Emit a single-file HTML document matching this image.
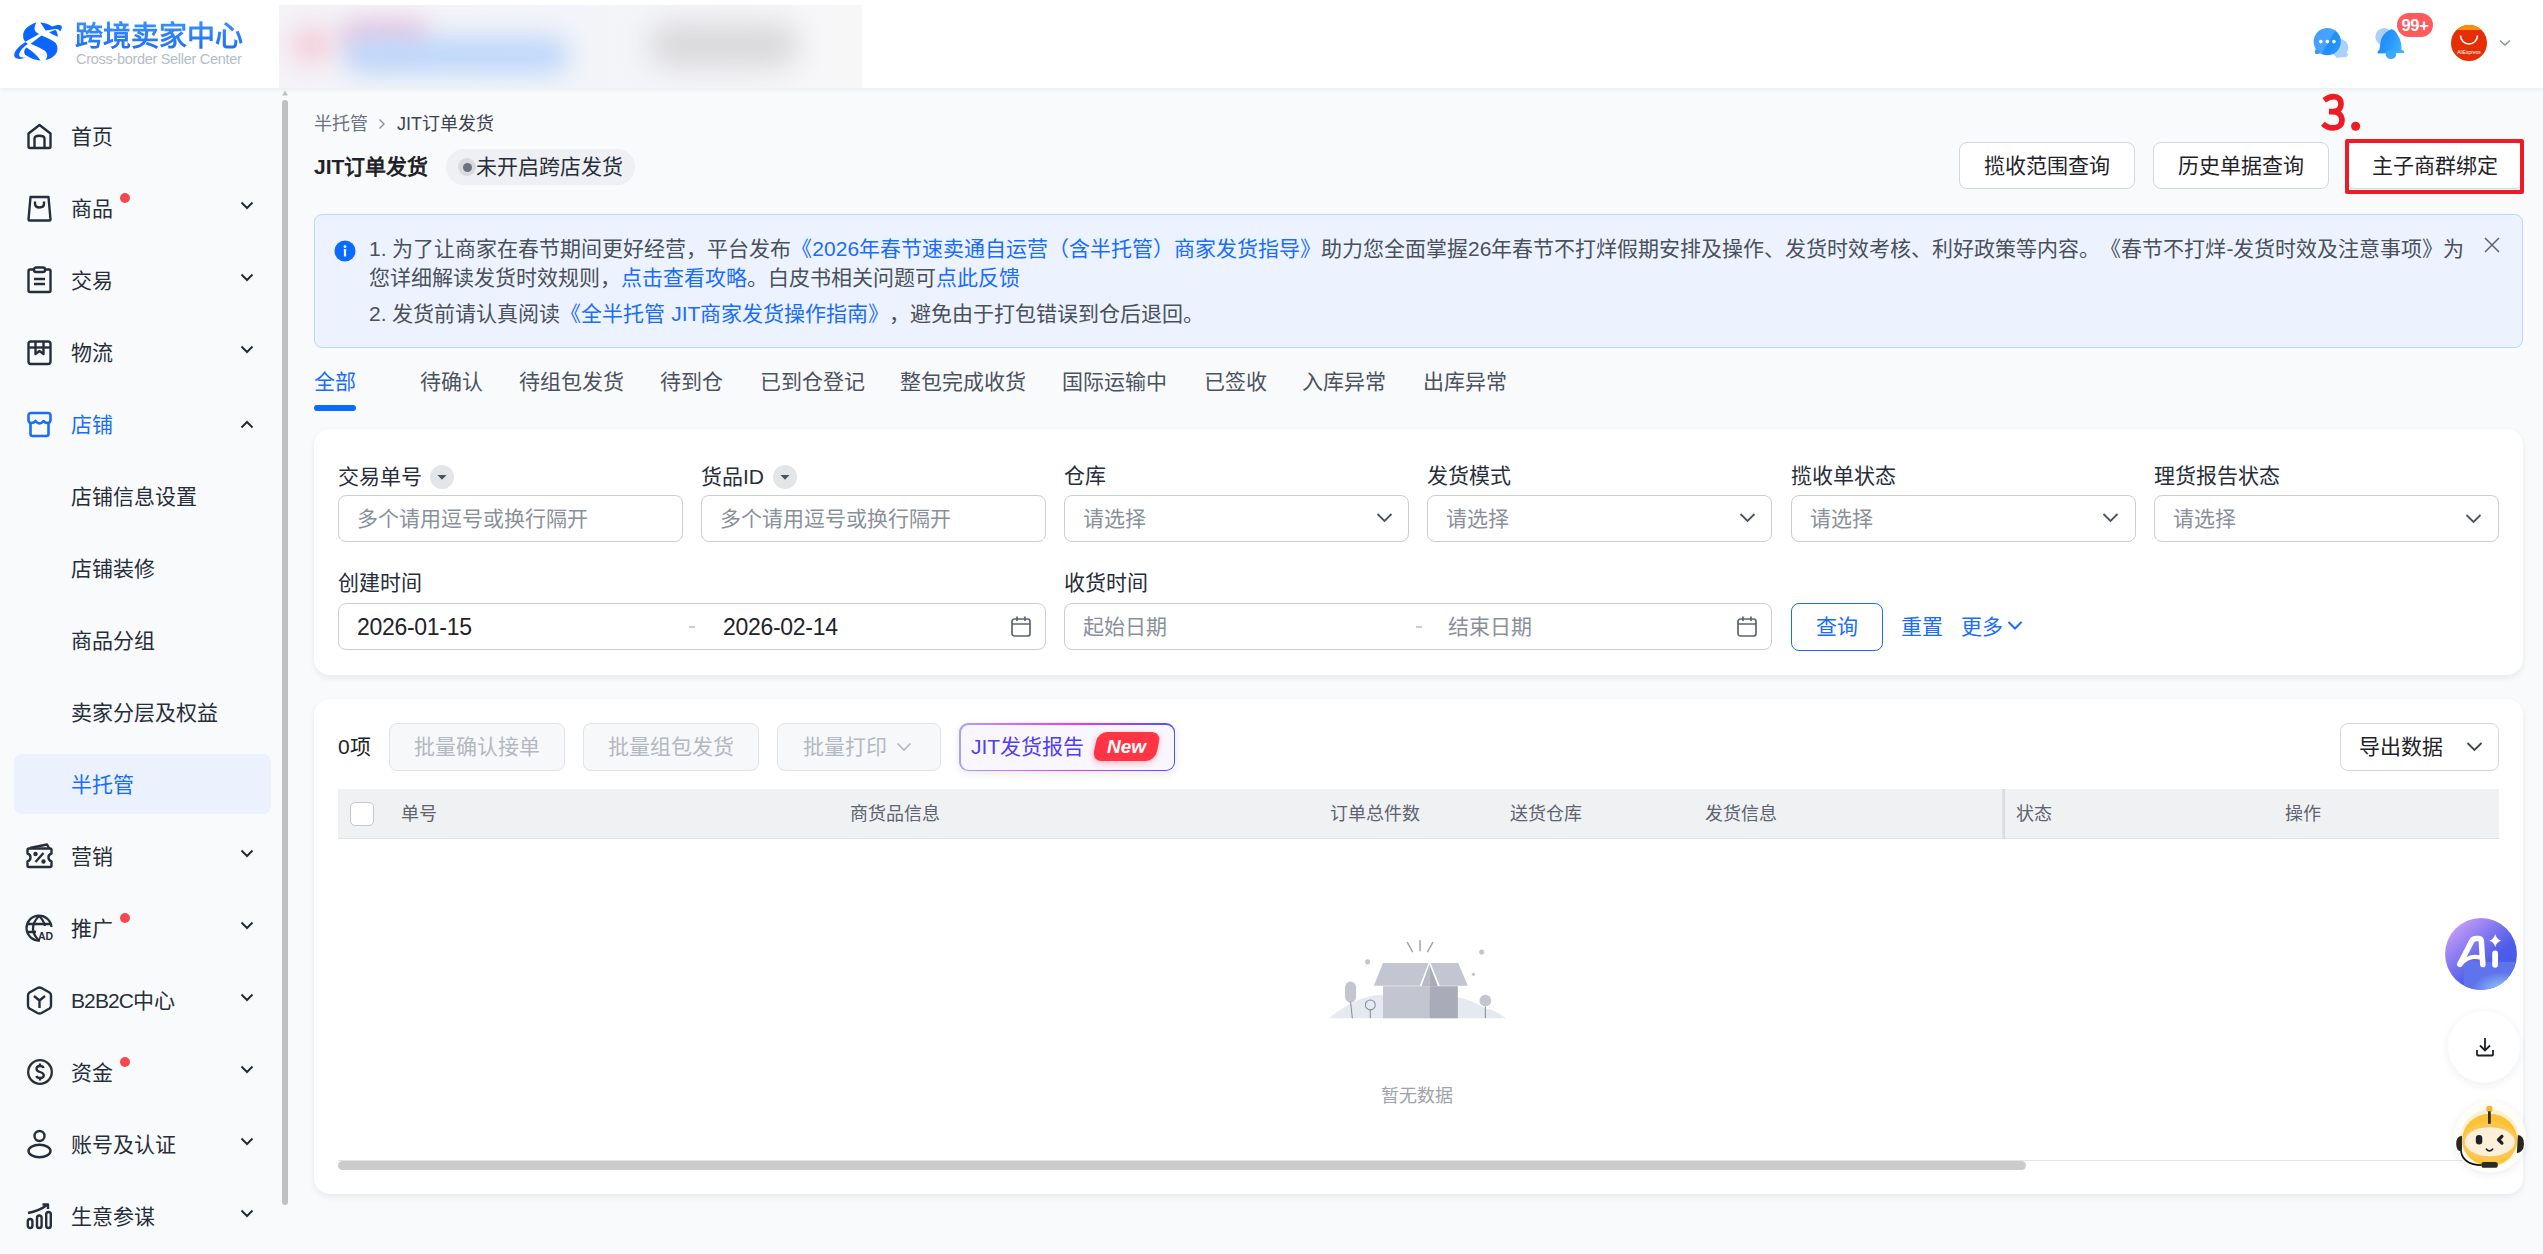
<!DOCTYPE html>
<html lang="zh-CN"><head><meta charset="utf-8">
<style>
*{box-sizing:border-box;margin:0;padding:0}
html,body{text-spacing-trim:space-all;width:2543px;height:1254px;overflow:hidden;background:#f9fafb;font-family:"Liberation Sans",sans-serif;color:#1f2329}
.a{position:absolute;white-space:nowrap}
#hdr{position:absolute;left:0;top:0;width:2543px;height:88px;background:#fff;box-shadow:0 2px 5px rgba(0,0,0,.06)}
.side-t{position:absolute;left:71px;font-size:21px;line-height:30px;color:#272e3b}
.chev{position:absolute;left:240px;width:14px;height:9px}
.card{position:absolute;background:#fff;border-radius:16px;box-shadow:0 3px 6px rgba(20,30,50,.075)}
.lbl{position:absolute;font-size:21px;line-height:30px;color:#272e3b;margin-top:1px}
.inp{position:absolute;height:47px;border:1.5px solid #c9ced6;border-radius:8px;background:#fff}
.ph{position:absolute;font-size:21px;line-height:30px;color:#8a909b}
.tab{position:absolute;top:367px;font-size:21px;line-height:30px;color:#4b5260}
.btn{position:absolute;height:47px;border:1.5px solid #d3d7de;border-radius:8px;background:#fff;font-size:21px;line-height:46px;text-align:center;color:#1f2329}
.th{position:absolute;top:800px;font-size:18px;line-height:28px;color:#5d6470}
</style></head><body>
<div id="hdr">
  <!-- logo mark -->
  <svg class="a" style="left:10px;top:18px" width="56" height="48" viewBox="0 0 1463 1254">
    <g fill="#0a66ff">
    <path d="M690 120 C520 170 340 290 342 460 C344 560 375 600 400 618 L765 420 C660 380 590 300 690 120 Z"/>
    <path d="M790 115 C920 120 1020 160 1100 225 C1180 190 1290 170 1345 200 C1370 240 1340 320 1305 355 C1290 300 1250 280 1190 290 L930 325 C880 240 830 170 790 115 Z"/>
    <path d="M1020 370 L1190 310 C1230 370 1250 430 1250 490 C1170 460 1090 420 1020 370 Z"/>
    <path d="M540 670 L820 455 C980 520 1100 570 1180 640 C1260 720 1260 880 1180 960 C1100 1050 1000 1090 925 1100 C990 1020 990 920 900 850 C780 770 650 720 540 670 Z"/>
    <path d="M430 770 C560 850 700 960 800 1110 C640 1100 480 1040 390 950 C350 900 370 820 430 770 Z"/>
    <path d="M400 625 C250 720 120 850 110 960 C105 1060 220 1100 410 1040 C300 1040 220 1010 240 940 C270 840 360 740 470 680 Z"/>
    </g>
  </svg>
  <div class="a" style="left:75px;top:17px;font-size:28px;line-height:40px;font-weight:bold;color:#1f74f7;background:linear-gradient(180deg,#3f95ff,#1766f3);-webkit-background-clip:text;-webkit-text-fill-color:transparent">跨境卖家中心</div>
  <div class="a" style="left:76px;top:50px;font-size:14.5px;line-height:18px;color:#b5bcc7;letter-spacing:-0.3px">Cross-border Seller Center</div>
  <!-- blurred area -->
  <div class="a" style="left:279px;top:5px;width:583px;height:83px;background:linear-gradient(90deg,#f4f3f8,#f3f4f9 50%,#f7f7f8);overflow:hidden">
    <div class="a" style="left:12px;top:22px;width:40px;height:36px;background:#f5ccd8;filter:blur(12px);border-radius:18px"></div>
    <div class="a" style="left:60px;top:14px;width:90px;height:34px;background:#e8c6df;filter:blur(12px);border-radius:17px"></div>
    <div class="a" style="left:65px;top:32px;width:225px;height:36px;background:#bcd6fa;filter:blur(13px);border-radius:18px"></div>
    <div class="a" style="left:370px;top:18px;width:150px;height:44px;background:#d9d9db;filter:blur(14px);border-radius:22px"></div>
  </div>
  <!-- chat icon -->
  <svg class="a" style="left:2300px;top:10px" width="60" height="60" viewBox="0 0 1254 1254">
    <defs>
      <linearGradient id="cg" x1="0" y1="0.2" x2="1" y2="0.8"><stop offset="0" stop-color="#4a98ff"/><stop offset=".5" stop-color="#45a6ff"/><stop offset=".58" stop-color="#1f8cff"/><stop offset="1" stop-color="#2a98ff"/></linearGradient>
      <filter id="cb"><feGaussianBlur stdDeviation="8"/></filter>
    </defs>
    <g filter="url(#cb)">
    <circle cx="820" cy="790" r="190" fill="#a9d1fb"/>
    <path d="M700 900 L990 900 Q1010 960 970 980 L760 1000 Z" fill="#a9d1fb"/>
    <circle cx="570" cy="660" r="285" fill="url(#cg)"/>
    <path d="M330 800 Q300 880 320 915 Q360 930 440 900 Z" fill="#3f96ff"/>
    <circle cx="435" cy="660" r="38" fill="#fff"/><circle cx="572" cy="660" r="38" fill="#fff"/><circle cx="708" cy="660" r="38" fill="#fff"/>
    </g>
  </svg>
  <!-- bell -->
  <svg class="a" style="left:2300px;top:10px" width="120" height="60" viewBox="0 0 2508 1254">
    <defs><linearGradient id="bg" x1="0" y1="0.3" x2="1" y2="0.7"><stop offset="0" stop-color="#1884ff"/><stop offset=".5" stop-color="#2a98ff"/><stop offset="1" stop-color="#3fb4ff"/></linearGradient>
    <filter id="bb"><feGaussianBlur stdDeviation="10"/></filter></defs>
    <g filter="url(#bb)">
    <circle cx="1760" cy="560" r="185" fill="#a8d0fb"/>
    <path d="M1900 400 Q1990 400 2040 520 Q2110 620 2120 760 L2120 830 Q2190 850 2180 900 L1630 910 Q1600 870 1660 830 L1680 700 Q1690 500 1900 400 Z" fill="url(#bg)"/>
    <ellipse cx="1900" cy="930" rx="110" ry="95" fill="#3aa8ff"/>
    </g>
  </svg>
  <div class="a" style="left:2397px;top:13px;width:36px;height:24px;border-radius:12px;background:#ff5b5f;color:#fff;font-size:16.5px;line-height:25px;font-weight:bold;text-align:center;letter-spacing:-0.3px">99+</div>
  <!-- avatar -->
  <div class="a" style="left:2451px;top:25px;width:36px;height:36px;border-radius:50%;background:#e62e04;overflow:hidden">
    <div class="a" style="left:0;top:0;width:36px;height:5px;background:#ff8f00"></div>
    <svg class="a" style="left:0;top:0" width="36" height="36" viewBox="0 0 36 36"><path d="M9.5 10.5 A8.5 8.5 0 0 0 26.5 10.5" stroke="#fff" stroke-width="1.6" fill="none"/></svg>
    <div class="a" style="left:0;top:24px;width:36px;text-align:center;font-size:5px;line-height:6px;color:#fff">AliExpress</div>
  </div>
  <svg class="a" style="left:2499px;top:39px" width="12" height="8" viewBox="0 0 12 8"><path d="M1 1.5 L6 6 L11 1.5" stroke="#8b93a3" stroke-width="1.4" fill="none"/></svg>
</div>
<div id="side">
  <div class="a" style="left:14px;top:754px;width:257px;height:60px;border-radius:8px;background:#ebf2fe"></div>
  <!-- icons -->
  <svg class="a" style="left:26px;top:123px" width="27" height="27" viewBox="0 0 27 27" fill="none" stroke="#272e3b" stroke-width="2.4" stroke-linejoin="round">
    <path d="M2.5 10.5 L13.5 2 L24.5 10.5 V23.5 Q24.5 25 23 25 H4 Q2.5 25 2.5 23.5 Z"/><path d="M8.5 25 V15.5 Q8.5 12.8 13.5 12.8 Q18.5 12.8 18.5 15.5 V25"/>
  </svg>
  <svg class="a" style="left:26px;top:195px" width="27" height="27" viewBox="0 0 27 27" fill="none" stroke="#272e3b" stroke-width="2.4" stroke-linejoin="round">
    <path d="M4.5 2 H22.5 L24.5 24.5 Q24.5 25.5 23.5 25.5 H3.5 Q2.5 25.5 2.5 24.5 Z"/><path d="M9 6.5 V8.5 Q9 12.5 13.5 12.5 Q18 12.5 18 8.5 V6.5"/>
  </svg>
  <svg class="a" style="left:26px;top:266px" width="27" height="28" viewBox="0 0 27 28" fill="none" stroke="#272e3b" stroke-width="2.4" stroke-linejoin="round">
    <path d="M8 3.5 H4 Q2.5 3.5 2.5 5 V24.5 Q2.5 26 4 26 H23 Q24.5 26 24.5 24.5 V5 Q24.5 3.5 23 3.5 H19"/><rect x="8" y="1.5" width="11" height="4.5" rx="2"/><path d="M8 13 H19 M8 18 H19"/>
  </svg>
  <svg class="a" style="left:26px;top:340px" width="27" height="26" viewBox="0 0 27 26" fill="none" stroke="#272e3b" stroke-width="2.4" stroke-linejoin="round">
    <rect x="2.5" y="1.5" width="22" height="22.5" rx="2.5"/><path d="M2.5 7.5 H24.5"/><path d="M9.5 1.5 V14 L13.5 11 L17.5 14 V1.5"/>
  </svg>
  <svg class="a" style="left:26px;top:411px" width="27" height="27" viewBox="0 0 27 27" fill="none" stroke="#1a6cff" stroke-width="2.6" stroke-linejoin="round">
    <path d="M5 2 H22 Q24.5 2 24.5 4.5 V9 Q24.5 12 21.5 12 Q19 12 17.5 10 Q15.5 12.5 13.5 12.5 Q11.5 12.5 9.5 10 Q8 12 5.5 12 Q2.5 12 2.5 9 V4.5 Q2.5 2 5 2 Z"/><path d="M4.5 12 V23 Q4.5 25 6.5 25 H20.5 Q22.5 25 22.5 23 V12"/>
  </svg>
  <svg class="a" style="left:25px;top:842px" width="29" height="28" viewBox="0 0 29 28" fill="none" stroke="#272e3b" stroke-width="2.4" stroke-linejoin="round">
    <path d="M5 6 L22 2.5 L24 6"/><path d="M4 6.5 H25 Q26.5 6.5 26.5 8 V11.5 Q23.5 12.5 23.5 15.5 Q23.5 18.5 26.5 19.5 V23.5 Q26.5 25 25 25 H4 Q2.5 25 2.5 23.5 V19.5 Q5.5 18.5 5.5 15.5 Q5.5 12.5 2.5 11.5 V8 Q2.5 6.5 4 6.5 Z"/><path d="M10.5 20 L18.5 11"/><circle cx="10.5" cy="12" r="1" fill="#272e3b"/><circle cx="18.5" cy="19.5" r="1" fill="#272e3b"/>
  </svg>
  <svg class="a" style="left:25px;top:914px" width="29" height="29" viewBox="0 0 29 29" fill="none" stroke="#272e3b" stroke-width="2.3">
    <path d="M15 26.5 A12.5 12.5 0 1 1 26.5 13"/><path d="M14 2 Q8 8 8 14.5 Q8 21 14 26.5"/><path d="M14 2 Q18.5 6 20 12"/><path d="M2.5 10 H25 M2.5 18 H11"/>
    <text x="13" y="25.5" font-family="Liberation Sans" font-size="10.5" font-weight="bold" fill="#272e3b" stroke="none">AD</text>
  </svg>
  <svg class="a" style="left:26px;top:986px" width="27" height="29" viewBox="0 0 27 29" fill="none" stroke="#272e3b" stroke-width="2.4" stroke-linejoin="round">
    <path d="M11.5 2 Q13.5 1 15.5 2 L23.5 6.5 Q25 7.5 25 9.5 V19.5 Q25 21.5 23.5 22.5 L15.5 27 Q13.5 28 11.5 27 L3.5 22.5 Q2 21.5 2 19.5 V9.5 Q2 7.5 3.5 6.5 Z"/><path d="M8 10 L13.5 14.5 L19 10 M13.5 14.5 V22"/>
  </svg>
  <svg class="a" style="left:26px;top:1058px" width="28" height="28" viewBox="0 0 28 28" fill="none" stroke="#272e3b" stroke-width="2.3">
    <circle cx="14" cy="14" r="11.8"/><path d="M17.5 10 Q17 8 14 8 Q10.5 8 10.5 10.7 Q10.5 13 14 14 Q17.8 15 17.8 17.5 Q17.8 20 14 20 Q11 20 10.3 18"/><path d="M14 5.5 V8 M14 20 V22.5"/>
  </svg>
  <svg class="a" style="left:26px;top:1129px" width="27" height="30" viewBox="0 0 27 30" fill="none" stroke="#272e3b" stroke-width="2.4">
    <circle cx="13.5" cy="7" r="5"/><ellipse cx="13.5" cy="22" rx="11" ry="6.2"/>
  </svg>
  <svg class="a" style="left:25px;top:1202px" width="29" height="28" viewBox="0 0 29 28" fill="none" stroke="#272e3b" stroke-width="2.4">
    <rect x="2.8" y="17" width="4.6" height="9" rx="2.3"/><rect x="12" y="13.5" width="4.6" height="12.5" rx="2.3"/><rect x="21.2" y="10" width="4.6" height="16" rx="2.3"/>
    <path d="M3 11 Q14 9 22 3"/><path d="M17.5 2.5 H23 V7" stroke-linejoin="round"/>
  </svg>
  <!-- labels -->
  <div class="side-t" style="top:122px">首页</div>
  <div class="side-t" style="top:194px">商品</div>
  <div class="side-t" style="top:266px">交易</div>
  <div class="side-t" style="top:338px">物流</div>
  <div class="side-t" style="top:410px;color:#1a6cff">店铺</div>
  <div class="side-t" style="top:482px">店铺信息设置</div>
  <div class="side-t" style="top:554px">店铺装修</div>
  <div class="side-t" style="top:626px">商品分组</div>
  <div class="side-t" style="top:698px">卖家分层及权益</div>
  <div class="side-t" style="top:770px;color:#1a6cff">半托管</div>
  <div class="side-t" style="top:842px">营销</div>
  <div class="side-t" style="top:914px">推广</div>
  <div class="side-t" style="top:986px"><span style="letter-spacing:-0.9px">B2B2C</span>中心</div>
  <div class="side-t" style="top:1058px">资金</div>
  <div class="side-t" style="top:1130px">账号及认证</div>
  <div class="side-t" style="top:1202px">生意参谋</div>
  <!-- red dots -->
  <div class="a" style="left:120px;top:193px;width:10px;height:10px;border-radius:50%;background:#f5484d"></div>
  <div class="a" style="left:120px;top:913px;width:10px;height:10px;border-radius:50%;background:#f5484d"></div>
  <div class="a" style="left:120px;top:1057px;width:10px;height:10px;border-radius:50%;background:#f5484d"></div>
  <!-- chevrons -->
  <svg class="chev" style="top:201px" viewBox="0 0 14 9"><path d="M1.5 1.5 L7 7 L12.5 1.5" stroke="#272e3b" stroke-width="2" fill="none"/></svg>
  <svg class="chev" style="top:273px" viewBox="0 0 14 9"><path d="M1.5 1.5 L7 7 L12.5 1.5" stroke="#272e3b" stroke-width="2" fill="none"/></svg>
  <svg class="chev" style="top:345px" viewBox="0 0 14 9"><path d="M1.5 1.5 L7 7 L12.5 1.5" stroke="#272e3b" stroke-width="2" fill="none"/></svg>
  <svg class="chev" style="top:420px" viewBox="0 0 14 9"><path d="M1.5 7.5 L7 2 L12.5 7.5" stroke="#272e3b" stroke-width="2" fill="none"/></svg>
  <svg class="chev" style="top:849px" viewBox="0 0 14 9"><path d="M1.5 1.5 L7 7 L12.5 1.5" stroke="#272e3b" stroke-width="2" fill="none"/></svg>
  <svg class="chev" style="top:921px" viewBox="0 0 14 9"><path d="M1.5 1.5 L7 7 L12.5 1.5" stroke="#272e3b" stroke-width="2" fill="none"/></svg>
  <svg class="chev" style="top:993px" viewBox="0 0 14 9"><path d="M1.5 1.5 L7 7 L12.5 1.5" stroke="#272e3b" stroke-width="2" fill="none"/></svg>
  <svg class="chev" style="top:1065px" viewBox="0 0 14 9"><path d="M1.5 1.5 L7 7 L12.5 1.5" stroke="#272e3b" stroke-width="2" fill="none"/></svg>
  <svg class="chev" style="top:1137px" viewBox="0 0 14 9"><path d="M1.5 1.5 L7 7 L12.5 1.5" stroke="#272e3b" stroke-width="2" fill="none"/></svg>
  <svg class="chev" style="top:1209px" viewBox="0 0 14 9"><path d="M1.5 1.5 L7 7 L12.5 1.5" stroke="#272e3b" stroke-width="2" fill="none"/></svg>
  <!-- scrollbar -->
  <svg class="a" style="left:281px;top:89px" width="8" height="8" viewBox="0 0 8 8"><path d="M1 6.5 L4 1.5 L7 6.5 Z" fill="#c1c1c1"/></svg>
  <div class="a" style="left:282px;top:100px;width:6px;height:1105px;border-radius:3px;background:#c1c1c1"></div>
</div>
<div id="top">
  <div class="a" style="left:314px;top:110px;font-size:18px;line-height:28px;color:#6b7280">半托管</div>
  <svg class="a" style="left:377px;top:118px" width="10" height="12" viewBox="0 0 10 12"><path d="M2.5 1.5 L7 6 L2.5 10.5" stroke="#8a909b" stroke-width="1.4" fill="none"/></svg>
  <div class="a" style="left:397px;top:110px;font-size:18px;line-height:28px;color:#3d4350">JIT订单发货</div>
  <div class="a" style="left:314px;top:152px;font-size:21px;line-height:30px;font-weight:bold;color:#1f2329">JIT订单发货</div>
  <div class="a" style="left:446px;top:149px;width:189px;height:36px;border-radius:18px;background:#eff0f3"></div>
  <div class="a" style="left:458px;top:158px;width:18px;height:18px;border-radius:50%;background:#d8dadf"></div>
  <div class="a" style="left:462.5px;top:162.5px;width:9px;height:9px;border-radius:50%;background:#6b7280"></div>
  <div class="a" style="left:476px;top:152px;font-size:21px;line-height:30px;color:#272e3b">未开启跨店发货</div>
  <!-- 3. annotation -->
  <svg class="a" style="left:2300px;top:85px" width="100" height="60" viewBox="0 0 2090 1254"><path d="M505 320 C590 255 650 243 700 243 C800 243 857 300 857 395 C857 500 780 557 680 557 L605 557 M680 557 C800 557 877 630 877 735 C877 840 800 897 690 897 C610 897 540 870 480 810" stroke="#ed1c24" stroke-width="118" fill="none"/><circle cx="1163" cy="862" r="95" fill="#ed1c24"/></svg>
  <!-- buttons -->
  <div class="btn" style="left:1959px;top:142px;width:176px">揽收范围查询</div>
  <div class="btn" style="left:2153px;top:142px;width:176px">历史单据查询</div>
  <div class="btn" style="left:2347px;top:142px;width:176px">主子商群绑定</div>
  <div class="a" style="left:2345px;top:139px;width:179px;height:55px;border:4px solid #ec1b25;border-radius:2px"></div>
  <!-- notice -->
  <div class="a" style="left:314px;top:214px;width:2209px;height:134px;border:1.5px solid #bcd5fb;border-radius:8px;background:#ecf3fe"></div>
  <svg class="a" style="left:334px;top:240px" width="22" height="22" viewBox="0 0 22 22"><circle cx="11" cy="11" r="10.5" fill="#0a6cff"/><circle cx="11" cy="6.6" r="1.4" fill="#fff"/><rect x="9.9" y="9" width="2.2" height="7.5" rx="0.6" fill="#fff"/></svg>
  <div class="a" style="left:369px;top:234px;font-size:21px;line-height:30px;color:#4a505c">1. 为了让商家在春节期间更好经营，平台发布<span style="color:#1a6cff">《2026年春节速卖通自运营（含半托管）商家发货指导》</span>助力您全面掌握26年春节不打烊假期安排及操作、发货时效考核、利好政策等内容。《春节不打烊-发货时效及注意事项》为</div>
  <div class="a" style="left:369px;top:263px;font-size:21px;line-height:30px;color:#4a505c">您详细解读发货时效规则，<span style="color:#1a6cff">点击查看攻略</span>。白皮书相关问题可<span style="color:#1a6cff">点此反馈</span></div>
  <div class="a" style="left:369px;top:299px;font-size:21px;line-height:30px;color:#4a505c">2. 发货前请认真阅读<span style="color:#1a6cff">《全半托管 JIT商家发货操作指南》</span>，避免由于打包错误到仓后退回。</div>
  <svg class="a" style="left:2483px;top:236px" width="18" height="18" viewBox="0 0 18 18"><path d="M2 2 L16 16 M16 2 L2 16" stroke="#5d6470" stroke-width="1.5"/></svg>
  <!-- tabs -->
  <div class="tab" style="left:314px;color:#1a6cff">全部</div>
  <div class="a" style="left:314px;top:405px;width:42px;height:6px;border-radius:3px;background:#0a6cff"></div>
  <div class="tab" style="left:420px">待确认</div>
  <div class="tab" style="left:519px">待组包发货</div>
  <div class="tab" style="left:660px">待到仓</div>
  <div class="tab" style="left:760px">已到仓登记</div>
  <div class="tab" style="left:900px">整包完成收货</div>
  <div class="tab" style="left:1062px">国际运输中</div>
  <div class="tab" style="left:1204px">已签收</div>
  <div class="tab" style="left:1302px">入库异常</div>
  <div class="tab" style="left:1423px">出库异常</div>
</div>
<div id="filter">
  <div class="card" style="left:314px;top:429px;width:2209px;height:246px"></div>
  <div class="lbl" style="left:338px;top:461px">交易单号</div>
  <div class="a" style="left:430px;top:465px;width:24px;height:24px;border-radius:50%;background:#e3e5e9"></div>
  <svg class="a" style="left:430px;top:465px" width="24" height="24" viewBox="0 0 24 24"><path d="M7.5 10 L16.5 10 L12 14.8 Z" fill="#4b5260"/></svg>
  <div class="lbl" style="left:701px;top:461px">货品ID</div>
  <div class="a" style="left:773px;top:465px;width:24px;height:24px;border-radius:50%;background:#e3e5e9"></div>
  <svg class="a" style="left:773px;top:465px" width="24" height="24" viewBox="0 0 24 24"><path d="M7.5 10 L16.5 10 L12 14.8 Z" fill="#4b5260"/></svg>
  <div class="lbl" style="left:1064px;top:460px">仓库</div>
  <div class="lbl" style="left:1427px;top:460px">发货模式</div>
  <div class="lbl" style="left:1791px;top:460px">揽收单状态</div>
  <div class="lbl" style="left:2154px;top:460px">理货报告状态</div>

  <div class="inp" style="left:338px;top:495px;width:345px"></div>
  <div class="ph" style="left:357px;top:504px">多个请用逗号或换行隔开</div>
  <div class="inp" style="left:701px;top:495px;width:345px"></div>
  <div class="ph" style="left:720px;top:504px">多个请用逗号或换行隔开</div>

  <div class="inp" style="left:1064px;top:495px;width:345px"></div>
  <div class="ph" style="left:1083px;top:504px">请选择</div>
  <svg class="a" style="left:1376px;top:512px" width="17" height="11" viewBox="0 0 17 11"><path d="M1.5 2 L8.5 9 L15.5 2" stroke="#4b5260" stroke-width="1.8" fill="none"/></svg>
  <div class="inp" style="left:1427px;top:495px;width:345px"></div>
  <div class="ph" style="left:1446px;top:504px">请选择</div>
  <svg class="a" style="left:1739px;top:512px" width="17" height="11" viewBox="0 0 17 11"><path d="M1.5 2 L8.5 9 L15.5 2" stroke="#4b5260" stroke-width="1.8" fill="none"/></svg>
  <div class="inp" style="left:1791px;top:495px;width:345px"></div>
  <div class="ph" style="left:1810px;top:504px">请选择</div>
  <svg class="a" style="left:2102px;top:512px" width="17" height="11" viewBox="0 0 17 11"><path d="M1.5 2 L8.5 9 L15.5 2" stroke="#4b5260" stroke-width="1.8" fill="none"/></svg>
  <div class="inp" style="left:2154px;top:495px;width:345px"></div>
  <div class="ph" style="left:2173px;top:504px">请选择</div>
  <svg class="a" style="left:2465px;top:513px" width="17" height="11" viewBox="0 0 17 11"><path d="M1.5 2 L8.5 9 L15.5 2" stroke="#4b5260" stroke-width="1.8" fill="none"/></svg>

  <div class="lbl" style="left:338px;top:567px">创建时间</div>
  <div class="lbl" style="left:1064px;top:567px">收货时间</div>
  <div class="inp" style="left:338px;top:603px;width:708px"></div>
  <div class="a" style="left:357px;top:612px;font-size:23px;line-height:30px;letter-spacing:-0.3px;color:#1f2329">2026-01-15</div>
  <div class="a" style="left:689px;top:626px;width:6px;height:1.5px;background:#c9cdd4"></div>
  <div class="a" style="left:723px;top:612px;font-size:23px;line-height:30px;letter-spacing:-0.3px;color:#1f2329">2026-02-14</div>
  <svg class="a" style="left:1010px;top:615px" width="22" height="23" viewBox="0 0 22 23" fill="none" stroke="#5d6470" stroke-width="1.7"><rect x="2" y="4" width="18" height="17" rx="2.5"/><path d="M2 9 H20 M7 1.5 V6 M15 1.5 V6"/></svg>
  <div class="inp" style="left:1064px;top:603px;width:708px"></div>
  <div class="ph" style="left:1083px;top:612px">起始日期</div>
  <div class="a" style="left:1416px;top:626px;width:6px;height:1.5px;background:#c9cdd4"></div>
  <div class="ph" style="left:1448px;top:612px">结束日期</div>
  <svg class="a" style="left:1736px;top:615px" width="22" height="23" viewBox="0 0 22 23" fill="none" stroke="#5d6470" stroke-width="1.7"><rect x="2" y="4" width="18" height="17" rx="2.5"/><path d="M2 9 H20 M7 1.5 V6 M15 1.5 V6"/></svg>
  <div class="a" style="left:1791px;top:603px;width:92px;height:48px;border:1.5px solid #1a6cff;border-radius:8px;background:#fff;font-size:21px;line-height:45px;text-align:center;color:#1a6cff">查询</div>
  <div class="a" style="left:1901px;top:612px;font-size:21px;line-height:30px;color:#1a6cff">重置</div>
  <div class="a" style="left:1961px;top:612px;font-size:21px;line-height:30px;color:#1a6cff">更多</div>
  <svg class="a" style="left:2007px;top:620px" width="16" height="11" viewBox="0 0 16 11"><path d="M1.5 2 L8 8.5 L14.5 2" stroke="#1a6cff" stroke-width="2" fill="none"/></svg>
</div>
<div id="table">
  <div class="card" style="left:314px;top:699px;width:2209px;height:495px"></div>
  <div class="a" style="left:338px;top:732px;font-size:21px;line-height:30px;color:#1f2329">0项</div>
  <div class="a" style="left:389px;top:723px;width:176px;height:48px;border:1.5px solid #e0e3e8;border-radius:8px;background:#f7f8fa;font-size:21px;line-height:45px;text-align:center;color:#b3b8c1">批量确认接单</div>
  <div class="a" style="left:583px;top:723px;width:176px;height:48px;border:1.5px solid #e0e3e8;border-radius:8px;background:#f7f8fa;font-size:21px;line-height:45px;text-align:center;color:#b3b8c1">批量组包发货</div>
  <div class="a" style="left:777px;top:723px;width:164px;height:48px;border:1.5px solid #e0e3e8;border-radius:8px;background:#f7f8fa;font-size:21px;line-height:45px;color:#b3b8c1;padding-left:25px">批量打印</div>
  <svg class="a" style="left:896px;top:742px" width="16" height="10" viewBox="0 0 16 10"><path d="M1.5 1.5 L8 8 L14.5 1.5" stroke="#b3b8c1" stroke-width="1.7" fill="none"/></svg>
  <!-- JIT button -->
  <div class="a" style="left:959px;top:723px;width:216px;height:48px;border-radius:9px;background:linear-gradient(90deg,#a7a5f3,#ef3bf6 50%,#4b53f6);box-shadow:0 2px 8px rgba(60,60,120,.12)"></div>
  <div class="a" style="left:960.5px;top:724.5px;width:213px;height:45px;border-radius:8px;background:#f9f7fd"></div>
  <div class="a" style="left:971px;top:732px;font-size:21px;line-height:30px;color:#4f3ef6">JIT发货报告</div>
  <div class="a" style="left:1095px;top:732px;width:63px;height:29px;border-radius:9px;background:#ff3545;transform:skewX(-12deg);box-shadow:0 2px 6px rgba(255,53,69,.35)"></div>
  <div class="a" style="left:1095px;top:732px;width:63px;height:29px;font-size:19px;line-height:29px;font-weight:bold;font-style:italic;color:#fff;text-align:center">New</div>
  <!-- export -->
  <div class="a" style="left:2340px;top:723px;width:159px;height:48px;border:1.5px solid #d3d7de;border-radius:8px;background:#fff;font-size:21px;line-height:45px;color:#1f2329;padding-left:18px">导出数据</div>
  <svg class="a" style="left:2466px;top:741px" width="17" height="11" viewBox="0 0 17 11"><path d="M1.5 2 L8.5 9 L15.5 2" stroke="#3d4350" stroke-width="1.8" fill="none"/></svg>
  <!-- header -->
  <div class="a" style="left:338px;top:789px;width:2161px;height:50px;background:#f0f1f3;border-bottom:1.5px solid #dde0e5"></div>
  <div class="a" style="left:2002px;top:789px;width:3px;height:49px;background:linear-gradient(90deg,#e3e5e8,#d5d8dd)"></div>
  <div class="a" style="left:350px;top:802px;width:24px;height:24px;border:1.5px solid #c3c8cf;border-radius:5px;background:#fff"></div>
  <div class="th" style="left:401px">单号</div>
  <div class="th" style="left:850px">商货品信息</div>
  <div class="th" style="left:1330px">订单总件数</div>
  <div class="th" style="left:1510px">送货仓库</div>
  <div class="th" style="left:1705px">发货信息</div>
  <div class="th" style="left:2016px">状态</div>
  <div class="th" style="left:2285px">操作</div>
  <!-- empty -->
  <svg class="a" style="left:1250px;top:900px" width="350" height="230" viewBox="0 0 1908 1254">
    <path d="M430 645 Q560 540 680 520 Q760 510 800 530 L1130 530 Q1200 540 1280 590 Q1340 600 1395 645 Z" fill="#e6e8f2"/>
    <rect x="725" y="470" width="253" height="175" fill="#c3c6d1"/>
    <rect x="978" y="470" width="155" height="175" fill="#a9acb8"/>
    <path d="M725 343 L975 343 L930 468 L675 468 Z" fill="#c3c6d1"/>
    <path d="M985 343 L1135 343 L1188 468 L1030 468 Z" fill="#c3c6d1"/>
    <path d="M978 345 L930 468 M978 345 L1030 468" stroke="#fff" stroke-width="9"/>
    <path d="M978 350 L935 470 L978 470 Z" fill="#b7bac6"/>
    <path d="M978 350 L1025 470 L978 470 Z" fill="#a9acb8"/>
    <path d="M857 230 L887 285 M927 220 L927 280 M997 230 L967 285" stroke="#9ea3ad" stroke-width="8"/>
    <circle cx="641" cy="337" r="14" fill="#c3c6d1"/><circle cx="1263" cy="284" r="14" fill="#c3c6d1"/><circle cx="1218" cy="405" r="9" fill="#c3c6d1"/>
    <rect x="518" y="445" width="60" height="115" rx="30" fill="#c3c6d1"/>
    <path d="M548 555 L558 645" stroke="#8c909c" stroke-width="6"/>
    <circle cx="656" cy="572" r="27" fill="none" stroke="#8c909c" stroke-width="6"/><path d="M656 599 L656 645" stroke="#8c909c" stroke-width="6"/>
    <circle cx="1283" cy="549" r="32" fill="#c3c6d1"/><path d="M1283 580 L1283 645" stroke="#8c909c" stroke-width="6"/>
  </svg>
  <div class="a" style="left:1381px;top:1083px;font-size:18px;line-height:26px;color:#9ea3ad">暂无数据</div>
  <!-- h scrollbar -->
  <div class="a" style="left:338px;top:1160px;width:2161px;height:1px;background:#e3e4ea"></div>
  <div class="a" style="left:338px;top:1161px;width:1688px;height:9px;border-radius:4.5px;background:#cbcbcb"></div>
  <!-- floats -->
  <svg class="a" style="left:2440px;top:910px" width="85" height="85" viewBox="0 0 1254 1254">
    <defs>
      <linearGradient id="aig" x1="0.15" y1="0.1" x2="0.85" y2="0.9"><stop offset="0" stop-color="#c29bf7"/><stop offset=".4" stop-color="#7a73ee"/><stop offset=".65" stop-color="#4d5de9"/><stop offset="1" stop-color="#4658e6"/></linearGradient>
      <radialGradient id="aig2" cx="0.7" cy="0.85" r="0.55"><stop offset="0" stop-color="#98cdf6"/><stop offset="1" stop-color="#5f74ec"/></radialGradient>
      <clipPath id="aic"><circle cx="605" cy="649" r="530"/></clipPath>
    </defs>
    <circle cx="605" cy="649" r="530" fill="url(#aig)"/>
    <rect x="350" y="765" width="820" height="500" fill="url(#aig2)" clip-path="url(#aic)"/>
    <path d="M292 800 L470 455 Q490 420 535 420 L575 420 Q605 422 610 460 L632 805" stroke="#fff" stroke-width="82" stroke-linecap="round" stroke-linejoin="round" fill="none"/>
    <path d="M300 805 Q400 690 520 690 L585 700" stroke="#fff" stroke-width="62" stroke-linecap="round" fill="none"/>
    <rect x="770" y="598" width="86" height="254" rx="43" fill="#fff"/>
    <path d="M815 355 Q832 435 905 452 Q832 468 815 548 Q798 468 725 452 Q798 435 815 355 Z" fill="#fff"/>
  </svg>
  <div class="a" style="left:2448px;top:1011px;width:72px;height:72px;border-radius:50%;background:#fff;box-shadow:0 2px 10px rgba(30,40,60,.08)"></div>
  <svg class="a" style="left:2474px;top:1036px" width="22" height="22" viewBox="0 0 22 22" fill="none" stroke="#1f2329" stroke-width="1.8"><path d="M11 2 V14 M6 9.5 L11 14.5 L16 9.5"/><path d="M3 14 V18.5 Q3 19.5 4 19.5 H18 Q19 19.5 19 18.5 V14"/></svg>
  <!-- robot -->
  <div class="a" style="left:2454px;top:1101px;width:72px;height:72px;border-radius:50%;background:#fffdf7;box-shadow:0 2px 8px rgba(30,40,60,.08)"></div>
  <svg class="a" style="left:2445px;top:1095px" width="90" height="85" viewBox="0 0 1328 1254">
    <circle cx="660" cy="640" r="430" fill="#fdf1d2"/>
    <ellipse cx="660" cy="660" rx="405" ry="385" fill="#fcc233"/>
    <ellipse cx="660" cy="690" rx="405" ry="290" fill="#fbc752"/>
    <ellipse cx="660" cy="690" rx="370" ry="215" fill="#fdf0d9"/>
    <circle cx="655" cy="205" r="48" fill="#fbb52c"/>
    <rect x="635" y="240" width="40" height="185" fill="#2b2b2b"/>
    <rect x="455" y="590" width="95" height="140" rx="47" fill="#222"/>
    <path d="M840 610 L790 660 L840 710" stroke="#222" stroke-width="48" stroke-linecap="round" stroke-linejoin="round" fill="none"/>
    <path d="M612 800 Q657 850 702 800" stroke="#222" stroke-width="26" stroke-linecap="round" fill="none"/>
    <path d="M250 600 Q165 610 165 720 Q165 830 250 840 Z" fill="#262626"/>
    <path d="M1075 590 Q1165 600 1165 720 Q1165 845 1060 860 Z" fill="#262626"/>
    <path d="M235 830 Q270 1030 535 1035" stroke="#111" stroke-width="24" fill="none"/>
    <rect x="535" y="990" width="245" height="85" rx="42" fill="#2b2b2b"/>
  </svg>
</div>
</body></html>
